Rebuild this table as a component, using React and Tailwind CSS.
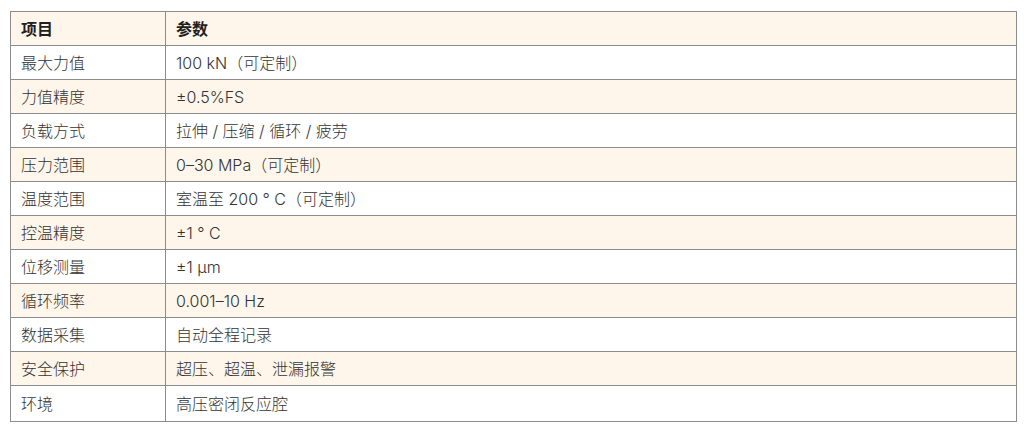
const rows = [
  ["最大力值", "100 kN（可定制）"],
  ["力值精度", "±0.5%FS"],
  ["负载方式", "拉伸 / 压缩 / 循环 / 疲劳"],
  ["压力范围", "0–30 MPa（可定制）"],
  ["温度范围", "室温至 200 ° C（可定制）"],
  ["控温精度", "±1 ° C"],
  ["位移测量", "±1 μm"],
  ["循环频率", "0.001–10 Hz"],
  ["数据采集", "自动全程记录"],
  ["安全保护", "超压、超温、泄漏报警"],
  ["环境", "高压密闭反应腔"],
]

export default function App() {
  return (
    <div className="min-h-screen bg-white pt-[11px] pl-[10px] pr-[9px] font-['Inter','Noto_Sans_CJK_SC',sans-serif] text-[16px] text-[#333]">
      <table className="w-full border-collapse">
        <thead>
          <tr className="bg-[#fef6ea]">
            <th className="h-[34px] w-[155px] border border-[#8c8c8c] px-[10px] text-left font-bold text-[#1f1f1f]">项目</th>
            <th className="h-[34px] border border-[#8c8c8c] px-[10px] text-left font-bold text-[#1f1f1f]">参数</th>
          </tr>
        </thead>
        <tbody>
          {rows.map(([k, v], i) => {
            const last = i === rows.length - 1
            return (
              <tr key={k} className={i % 2 === 1 ? "bg-[#fef6ea]" : "bg-white"}>
                <td className={(last ? "h-[36px] " : "h-[34px] ") + "border border-[#8c8c8c] px-[10px] font-light"}>{k}</td>
                <td className={(last ? "h-[36px] " : "h-[34px] ") + "border border-[#8c8c8c] px-[10px] font-light"}>{v}</td>
              </tr>
            )
          })}
        </tbody>
      </table>
    </div>
  )
}
